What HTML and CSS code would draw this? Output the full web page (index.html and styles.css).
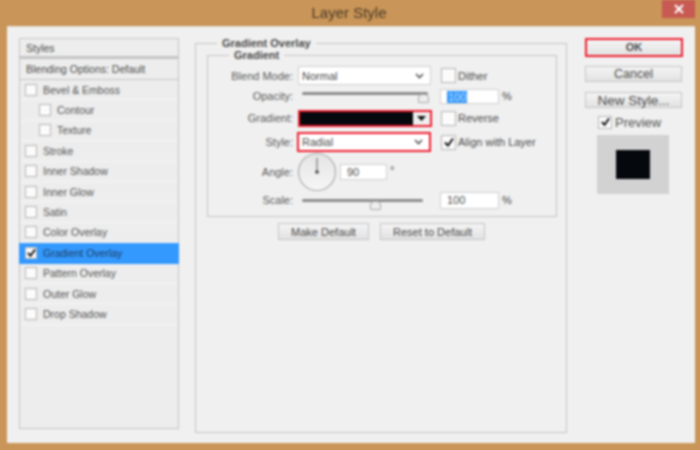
FILE: index.html
```html
<!DOCTYPE html>
<html>
<head>
<meta charset="utf-8">
<title>Layer Style</title>
<link rel="stylesheet" href="styles.css">
</head>
<body>
<div class="frame">
  <header class="titlebar">
    <span class="title">Layer Style</span>
    <span class="close"><svg width="12" height="10" viewBox="0 0 12 10"><path d="M2 1l8 8M10 1l-8 8" stroke="#fff" stroke-width="2" fill="none"/></svg></span>
  </header>
  <div class="dialog">
    <aside class="styles">
      <div class="head">Styles</div>
      <div class="head second">Blending Options: Default</div>
      <ul class="list">
        <li class="item"><i class="box"></i>Bevel &amp; Emboss</li>
        <li class="item sub"><i class="box"></i>Contour</li>
        <li class="item sub"><i class="box"></i>Texture</li>
        <li class="item"><i class="box"></i>Stroke</li>
        <li class="item"><i class="box"></i>Inner Shadow</li>
        <li class="item"><i class="box"></i>Inner Glow</li>
        <li class="item"><i class="box"></i>Satin</li>
        <li class="item"><i class="box"></i>Color Overlay</li>
        <li class="item active"><i class="box on"><svg width="11" height="10" viewBox="0 0 12 11"><path d="M2 5.500l3 3 5-7" stroke="#111" stroke-width="2" fill="none"/></svg></i>Gradient Overlay</li>
        <li class="item"><i class="box"></i>Pattern Overlay</li>
        <li class="item"><i class="box"></i>Outer Glow</li>
        <li class="item"><i class="box"></i>Drop Shadow</li>
      </ul>
    </aside>

    <main class="center">
      <fieldset class="outer">
        <legend class="legend">Gradient Overlay</legend>
        <fieldset class="inner">
          <legend class="legend">Gradient</legend>
          <div class="row r-blend">
            <label class="lab">Blend Mode:</label>
            <div class="select plain">Normal<svg class="chev" width="9" height="6" viewBox="0 0 9 6"><path d="M1 1l3.500 3.500L8 1" stroke="#555" stroke-width="1.600" fill="none"/></svg></div>
            <i class="box"></i><span class="opt">Dither</span>
          </div>
          <div class="row r-opacity">
            <label class="lab">Opacity:</label>
            <div class="slider wide"><span class="knob k-end"></span></div>
            <div class="num"><span class="sel">100</span></div><span class="unit">%</span>
          </div>
          <div class="row r-grad">
            <label class="lab">Gradient:</label>
            <div class="gradient"><span class="fill"></span><span class="drop"><svg width="9" height="5" viewBox="0 0 9 5"><path d="M0 0h9L4.500 5z" fill="#111"/></svg></span></div>
            <i class="box"></i><span class="opt">Reverse</span>
          </div>
          <div class="row r-style">
            <label class="lab">Style:</label>
            <div class="select marked">Radial<svg class="chev" width="9" height="6" viewBox="0 0 9 6"><path d="M1 1l3.500 3.500L8 1" stroke="#555" stroke-width="1.600" fill="none"/></svg></div>
            <i class="box on"><svg width="12" height="11" viewBox="0 0 12 11"><path d="M2 5.500l3 3 5-7" stroke="#111" stroke-width="2" fill="none"/></svg></i><span class="opt">Align with Layer</span>
          </div>
          <div class="row r-angle">
            <label class="lab">Angle:</label>
            <svg class="dial" width="40" height="40" viewBox="0 0 40 40"><defs><linearGradient id="dg" x1="0" y1="0" x2="0" y2="1"><stop offset="0" stop-color="#e4e4e4"/><stop offset="1" stop-color="#f6f6f6"/></linearGradient></defs><circle cx="20" cy="20" r="18.500" fill="url(#dg)" stroke="#aaa" stroke-width="1.200"/><path d="M20 6v14" stroke="#777" stroke-width="1.200"/><circle cx="20" cy="20" r="1.800" fill="#444"/></svg>
            <div class="num short">90</div><span class="unit deg">°</span>
          </div>
          <div class="row r-scale">
            <label class="lab">Scale:</label>
            <div class="slider"><span class="knob k-mid"></span></div>
            <div class="num">100</div><span class="unit">%</span>
          </div>
        </fieldset>
        <div class="defaults">
          <button class="btn make">Make Default</button>
          <button class="btn reset">Reset to Default</button>
        </div>
      </fieldset>
    </main>

    <aside class="actions">
      <button class="btn action ok">OK</button>
      <button class="btn action cancel">Cancel</button>
      <button class="btn action newstyle">New Style...</button>
      <div class="preview"><i class="box on"><svg width="11" height="10" viewBox="0 0 12 11"><path d="M2 5.500l3 3 5-7" stroke="#111" stroke-width="2" fill="none"/></svg></i><span class="prevlabel">Preview</span></div>
      <div class="swatch"><span class="black"></span></div>
    </aside>
  </div>
</div>
</body>
</html>
```
FILE: styles.css
```css
* { box-sizing: border-box; }
html, body { margin: 0; padding: 0; }
body {
  width: 700px;
  height: 450px;
  overflow: hidden;
  background: #c99558;
  font-family: "Liberation Sans", Arial, sans-serif;
  font-size: 10.500px;
  color: #4c4c4c;
}
.frame {
  width: 700px;
  height: 450px;
  padding: 0 5px 7px 7px;
  display: flex;
  flex-direction: column;
  filter: blur(0.8px);
}
.titlebar {
  height: 26px;
  flex: none;
  display: flex;
  justify-content: center;
  position: relative;
}
.title {
  font-size: 15px;
  color: #4a3a28;
  line-height: 26px;
  margin-left: -4px;
}
.close {
  position: absolute;
  right: 0;
  top: 0;
  width: 33px;
  height: 18px;
  background: #c75a52;
  display: flex;
  align-items: center;
  justify-content: center;
}
.dialog {
  flex: 1;
  background: #f0f0f0;
  border-top: 1px solid #e0dcd6;
  display: flex;
  padding: 11px 0 0 12px;
}
.styles {
  width: 160px;
  height: 391px;
  flex: none;
  border: 1.500px solid #c4c4c4;
  background: #ededed;
}
.head {
  height: 19px;
  line-height: 18px;
  padding-left: 6px;
  color: #4c4c4c;
  border-bottom: 2px solid #c4c4c4;
}
.second {
  border-top: 1px solid #c4c4c4;
  border-bottom-width: 1.500px;
  height: 22px;
  line-height: 20px;
}
.list { list-style: none; margin: 0; padding: 0; }
.item {
  height: 20.400px;
  display: flex;
  align-items: center;
  padding-left: 5px;
  gap: 6px;
  color: #555;
  border-bottom: 1px solid #f6f6f6;
}
.item.sub { padding-left: 19px; }
.item.active { background: #3399ff; color: #1f3f66; margin: 0 -1px; padding-left: 6px; border-bottom: 0; }
.box {
  width: 12px;
  height: 12px;
  flex: none;
  border: 1.500px solid #b4b4b4;
  background: #fbfbfb;
  display: inline-flex;
  align-items: center;
  justify-content: center;
}
.box svg { flex: none; }
.center { margin-left: 16px; width: 372px; flex: none; font-size: 11px; }
.outer {
  margin: -1px 0 0;
  padding: 0 11px;
  width: 372px;
  height: 396px;
  border: 1.500px solid #c4c4c4;
  min-width: 0;
}
.inner {
  margin: 0;
  padding: 0;
  width: 350px;
  height: 168px;
  border: 1.500px solid #c4c4c4;
  min-width: 0;
  position: relative;
}
.legend {
  font-weight: 700;
  color: #4c4c4c;
  padding: 0 5px;
  margin-left: 10px;
  line-height: 12px;
}
.inner .legend { margin-left: 21px; }
.row {
  display: flex;
  align-items: center;
  color: #4c4c4c;
}
.row .box { width: 15px; height: 15px; }
.lab {
  width: 85px;
  flex: none;
  text-align: right;
  color: #5a5a5a;
}
.opt { margin-left: 2px; }
.r-blend { margin-top: 5px; height: 19px; }
.r-opacity { margin-top: 4px; height: 14px; }
.r-grad { margin-top: 7px; height: 16px; }
.r-style { margin-top: 6px; height: 20px; }
.r-angle { margin-top: 0; height: 39px; }
.r-scale { margin-top: 0; height: 18px; }
.select {
  width: 133px;
  height: 19px;
  margin-left: 5px;
  margin-right: 10px;
  flex: none;
  display: flex;
  align-items: center;
  justify-content: space-between;
  background: #fff;
  border: 1px solid #cfcfcf;
  padding: 0 6px 0 3px;
}
.select.marked {
  height: 20px;
  width: 134px;
  margin-left: 4px;
  border: 2px solid #ee1c2e;
  margin-right: 10px;
}
.slider {
  width: 121px;
  height: 3px;
  margin-left: 9px;
  margin-right: 17px;
  flex: none;
  background: #8c8c8c;
  border-radius: 2px;
  position: relative;
  align-self: center;
}
.slider.wide { width: 126px; margin-right: 12px; margin-top: -6px; }
.knob {
  position: absolute;
  top: 2px;
  width: 11px;
  height: 9px;
  background: #eee;
  border: 1px solid #aaa;
  border-radius: 4px 4px 1px 1px;
}
.k-end { right: -1px; }
.k-mid { left: 68px; }
.num {
  width: 59px;
  height: 15px;
  flex: none;
  background: #fff;
  border: 1px solid #cfcfcf;
  padding-left: 6px;
  line-height: 14px;
}
.r-scale .num { height: 17px; line-height: 15px; }
.sel { background: #3399ff; color: #bcd9f5; padding: 0 1px; }
.num.short { width: 47px; height: 16px; margin-left: 3px; line-height: 14px; }
.unit { margin-left: 3px; font-size: 11px; }
.unit.deg { margin-left: 3px; margin-top: -4px; }
.gradient {
  width: 134px;
  height: 17px;
  margin-left: 5px;
  margin-right: 9px;
  flex: none;
  border: 2px solid #ee1c2e;
  background: #fff;
  display: flex;
}
.fill { flex: 1; background: #05080c; }
.drop { width: 17px; background: #efefef; display: flex; align-items: center; justify-content: center; }
.dial { margin-left: 4px; flex: none; }
.btn {
  font: inherit;
  color: #4c4c4c;
  background: linear-gradient(#f4f4f4, #e2e2e2);
  border: 1.500px solid #c4c4c4;
  padding: 0;
  height: 17px;
}
.defaults {
  display: flex;
  gap: 11px;
  margin-top: 6px;
  margin-left: 71px;
}
.make { width: 91px; }
.reset { width: 105px; }
.actions {
  margin-left: 18px;
  width: 99px;
  flex: none;
  display: flex;
  flex-direction: column;
}
.action { width: 97px; height: 16px; font-size: 12.500px; line-height: 13px; }
.ok {
  width: 98px;
  height: 19px;
  border: 2px solid #ee1c2e;
  font-weight: 700;
  font-size: 11px;
}
.cancel { margin-top: 9px; }
.newstyle { margin-top: 10px; font-size: 13.500px; }
.preview {
  display: flex;
  align-items: center;
  margin-top: 7px;
  margin-left: 13px;
  height: 14px;
  font-size: 13px;
  color: #555;
}
.preview .box { width: 14px; height: 13px; }
.prevlabel { margin-left: 3px; }
.swatch {
  width: 72px;
  height: 59px;
  margin-top: 6px;
  margin-left: 12px;
  background: #d2d2d2;
  display: flex;
  align-items: center;
  justify-content: center;
}
.black { width: 34px; height: 29px; background: #05080c; }
```
